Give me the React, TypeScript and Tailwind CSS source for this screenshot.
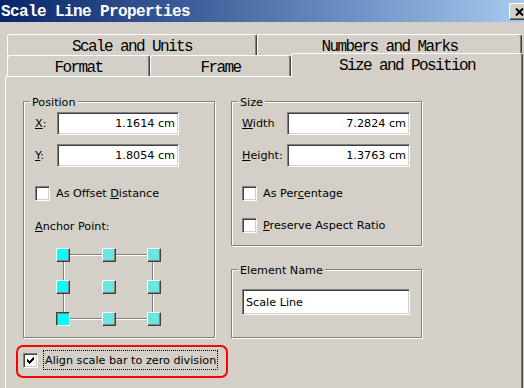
import React from "react";

function Checkbox({ checked = false }: { checked?: boolean }) {
  return (
    <div className="w-[15px] h-[15px] shrink-0 bg-white border border-t-[#808080] border-l-[#808080] border-b-white border-r-white shadow-[inset_1px_1px_0_#404040,inset_-1px_-1px_0_#d4d0c8] flex items-center justify-center">
      {checked && (
        <svg width="7" height="7" viewBox="0 0 7 7" shapeRendering="crispEdges">
          <path
            d="M6 0h1v1h-1z M5 1h2v1h-2z M0 2h1v1h-1z M4 2h3v1h-3z M0 3h2v1h-2z M3 3h3v1h-3z M0 4h5v1h-5z M1 5h3v1h-3z M2 6h1v1h-1z"
            fill="#000"
          />
        </svg>
      )}
    </div>
  );
}

function Field({ value, className, left = false }: { value: string; className: string; left?: boolean }) {
  return (
    <div
      className={
        "bg-white border border-t-[#808080] border-l-[#808080] border-b-white border-r-white shadow-[inset_1px_1px_0_#404040,inset_-1px_-1px_0_#d4d0c8] flex items-center " +
        (left ? "justify-start pl-[3px] " : "justify-end pr-[3px] ") +
        className
      }
    >
      <span className="whitespace-nowrap">{value}</span>
    </div>
  );
}

function Group({ label, className, children }: { label: string; className: string; children?: React.ReactNode }) {
  return (
    <div className={"relative border border-[#808080] shadow-[1px_1px_0_#fff,inset_1px_1px_0_#fff] " + className}>
      <span className="absolute -top-[6px] left-[6px] px-[2px] bg-[#d4d0c8] leading-[13px] whitespace-nowrap">{label}</span>
      {children}
    </div>
  );
}

const raised =
  "w-[14px] h-[14px] border border-t-white border-l-white border-r-[#404040] border-b-[#404040] shadow-[inset_-1px_-1px_0_#808080]";
const pressed =
  "w-[14px] h-[14px] border border-t-[#404040] border-l-[#404040] border-r-white border-b-white shadow-[inset_1px_1px_0_#808080]";

function Anchor() {
  return (
    <div className="relative w-[105px] h-[78px] mt-[15px] ml-[21px]">
      <div className="absolute left-[7px] top-[6px] w-[90px] h-[65px] border border-[#808080] shadow-[1px_1px_0_#fff,inset_1px_1px_0_#fff]" />
      <div className="relative grid grid-cols-[14px_14px_14px] grid-rows-[14px_14px_14px] justify-between content-between w-full h-full">
        <div className={raised + " bg-[#00ffff]"} />
        <div className={raised + " bg-[#6ae5e0]"} />
        <div className={raised + " bg-[#6ae5e0]"} />
        <div className={raised + " bg-[#00ffff]"} />
        <div className={raised + " bg-[#6ae5e0]"} />
        <div className={raised + " bg-[#6ae5e0]"} />
        <div className={pressed + " bg-[#00ffff]"} />
        <div className={raised + " bg-[#6ae5e0]"} />
        <div className={raised + " bg-[#6ae5e0]"} />
      </div>
    </div>
  );
}

const tabBase =
  "shrink-0 flex justify-center border-t border-l border-r border-t-white border-l-white border-r-[#404040] rounded-t-[3px] shadow-[inset_-1px_0_0_#808080] bg-[#d4d0c8] font-['Liberation_Mono',monospace] text-[16px] leading-[16px] tracking-[-1.6px] whitespace-nowrap";

export default function App() {
  return (
    <div className="w-[524px] h-[388px] overflow-hidden bg-[#d4d0c8] flex flex-col font-['DejaVu_Sans',sans-serif] text-[11.2px] leading-[13px] text-black">
      {/* Title bar */}
      <div className="h-[22px] shrink-0 flex items-start justify-between bg-linear-to-r from-[#0a246a] to-[#a6caf0]">
        <span className="mt-[3px] pl-[1px] font-['Liberation_Mono',monospace] font-bold text-[16px] leading-[18px] tracking-[-0.6px] text-white whitespace-nowrap">
          Scale Line Properties
        </span>
        <div className="mt-[3px] -mr-[5px] w-[20px] h-[17px] shrink-0 bg-[#d4d0c8] border border-t-white border-l-white border-r-[#404040] border-b-[#404040] shadow-[inset_-1px_-1px_0_#808080] pl-[5px] pt-[4px]">
          <svg width="9" height="8" viewBox="0 0 9 8">
            <path d="M1 0.5 L8 7.5 M8 0.5 L1 7.5" stroke="#000" strokeWidth="2" />
          </svg>
        </div>
      </div>

      {/* Tabs + panel */}
      <div className="flex flex-col pt-[12px] pl-[5px]">
        <div className="flex pl-[2px] h-[21px]">
          <div className={tabBase + " w-[250px] h-[21px] pt-[4px]"}>Scale and Units</div>
          <div className={tabBase + " w-[265px] h-[21px] pt-[4px]"}>Numbers and Marks</div>
        </div>
        <div className="flex items-start pl-[2px] h-[21px]">
          <div className={tabBase + " w-[143px] h-[21px] pt-[4px]"}>Format</div>
          <div className={tabBase + " w-[141px] h-[21px] pt-[4px]"}>Frame</div>
          <div className={tabBase + " relative z-10 w-[232px] h-[24px] -mt-[2px] pt-[4px]"}>Size and Position</div>
        </div>

        <div className="w-[518px] h-[330px] border-t border-l border-r border-t-white border-l-white border-r-[#404040] shadow-[inset_-1px_0_0_#808080] flex flex-col pl-[17px] pt-[24px]">
          <div className="flex gap-[16px]">
            {/* Position */}
            <Group label="Position" className="w-[192px] h-[237px] shrink-0">
              <div className="flex flex-col pl-[11px] pt-[10px]">
                <div className="flex items-center h-[23px]">
                  <span className="w-[22px]">
                    <u>X</u>:
                  </span>
                  <Field value="1.1614 cm" className="w-[122px] h-[23px]" />
                </div>
                <div className="mt-[9px] flex items-center h-[23px]">
                  <span className="w-[22px]">
                    <u>Y</u>:
                  </span>
                  <Field value="1.8054 cm" className="w-[122px] h-[23px]" />
                </div>
                <div className="mt-[19px] flex items-center gap-[6px]">
                  <Checkbox />
                  <span className="whitespace-nowrap">
                    As Offset <u>D</u>istance
                  </span>
                </div>
                <div className="mt-[19px] whitespace-nowrap">
                  <u>A</u>nchor Point:
                </div>
                <Anchor />
              </div>
            </Group>

            <div className="flex flex-col">
              {/* Size */}
              <Group label="Size" className="w-[191px] h-[145px]">
                <div className="flex flex-col pl-[10px] pt-[10px]">
                  <div className="flex items-center h-[23px]">
                    <span className="w-[45px] whitespace-nowrap">
                      <u>W</u>idth<span className="text-[#c8bca8]">:</span>
                    </span>
                    <Field value="7.2824 cm" className="w-[123px] h-[23px]" />
                  </div>
                  <div className="mt-[9px] flex items-center h-[23px]">
                    <span className="w-[45px] whitespace-nowrap">
                      <u>H</u>eight:
                    </span>
                    <Field value="1.3763 cm" className="w-[123px] h-[23px]" />
                  </div>
                  <div className="mt-[19px] flex items-center gap-[6px]">
                    <Checkbox />
                    <span className="whitespace-nowrap">
                      As Per<u>c</u>entage
                    </span>
                  </div>
                  <div className="mt-[17px] flex items-center gap-[6px]">
                    <Checkbox />
                    <span className="whitespace-nowrap">
                      <u>P</u>reserve Aspect Ratio
                    </span>
                  </div>
                </div>
              </Group>

              {/* Element Name */}
              <Group label="Element Name" className="mt-[23px] w-[191px] h-[69px]">
                <div className="pl-[10px] pt-[19px]">
                  <Field value="Scale Line" left className="w-[168px] h-[26px]" />
                </div>
              </Group>
            </div>
          </div>

          {/* Align row */}
          <div className="-ml-[7px] mt-[7px] w-[212px] h-[33px] border-2 border-[#ff0000] rounded-[7px] flex items-center pl-[5px] pb-[3px]">
            <Checkbox checked />
            <span className="ml-[5px] h-[20px] border border-dotted border-black px-[1px] flex items-center whitespace-nowrap">
              Align scale bar to zero division
            </span>
          </div>
        </div>
      </div>
    </div>
  );
}
